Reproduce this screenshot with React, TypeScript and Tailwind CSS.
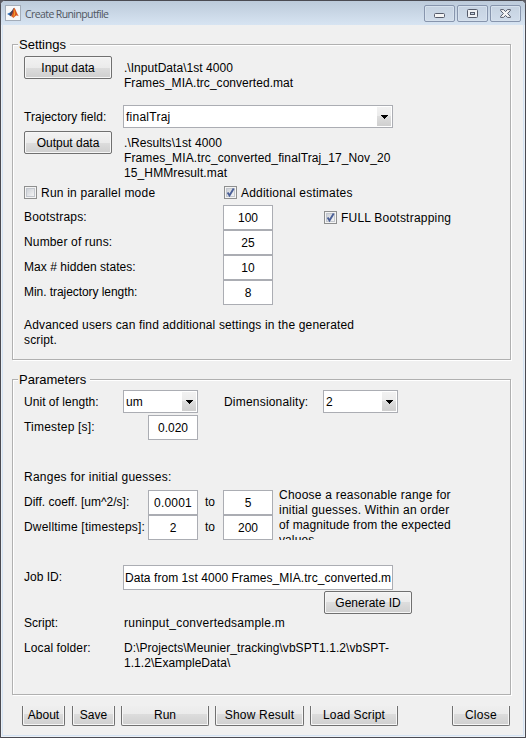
import type { ReactNode } from "react";

function Label({ children, className = "" }: { children: ReactNode; className?: string }) {
  return <div className={`shrink-0 whitespace-pre leading-[15px] ${className}`}>{children}</div>;
}

function PushButton({ children, className = "" }: { children: ReactNode; className?: string }) {
  return (
    <button
      className={`flex h-[23px] w-[88px] shrink-0 justify-center whitespace-pre rounded-[2px] border border-[#707070] bg-[linear-gradient(#f2f2f2_0%,#ebebeb_50%,#dddddd_50%,#cfcfcf_100%)] pt-1 leading-[15px] shadow-[inset_0_0_0_1px_#f6f6f6] ${className}`}
    >
      {children}
    </button>
  );
}

function FooterButton({ children, className }: { children: ReactNode; className: string }) {
  return (
    <button
      className={`flex h-5 shrink-0 justify-center whitespace-pre rounded-b-[2px] border border-t-0 border-[#707070] bg-[linear-gradient(#efefef_0%,#ebebeb_40%,#dddddd_40%,#cfcfcf_100%)] pt-[2px] leading-[15px] shadow-[inset_1px_-1px_0_#f6f6f6,inset_-1px_0_0_#f6f6f6] ${className}`}
    >
      {children}
    </button>
  );
}

function Field({ children, className = "w-[50px] text-center" }: { children: ReactNode; className?: string }) {
  return (
    <div className={`h-[25px] shrink-0 overflow-hidden whitespace-pre border border-[#abadb3] bg-white pt-[5px] leading-[15px] ${className}`}>
      {children}
    </div>
  );
}

function Combo({ children, className }: { children: ReactNode; className: string }) {
  return (
    <div className={`flex h-[23px] shrink-0 justify-between border border-[#abadb3] bg-white pl-[2px] ${className}`}>
      <span className="pt-1 leading-[15px]">{children}</span>
      <span className="my-px mr-px flex h-[19px] w-[14px] items-center justify-center bg-[linear-gradient(#f2f2f2_0%,#ebebeb_50%,#dddddd_50%,#cfcfcf_100%)]">
        <svg width="7" height="4" viewBox="0 0 7 4" shapeRendering="crispEdges">
          <path d="M0 0h7v1h-1v1h-1v1h-1v1h-1v-1h-1v-1h-1v-1h-1z" fill="#000" />
        </svg>
      </span>
    </div>
  );
}

function Check({ checked = false, className = "" }: { checked?: boolean; className?: string }) {
  return (
    <svg className={`shrink-0 ${className}`} width="13" height="13" viewBox="0 0 13 13">
      <defs>
        <linearGradient id="well" x1="0" y1="0" x2="1" y2="1">
          <stop offset="0" stopColor="#cbcfd5" />
          <stop offset="1" stopColor="#f6f6f6" />
        </linearGradient>
      </defs>
      <rect x=".5" y=".5" width="12" height="12" fill="#f4f4f4" stroke="#8e8f8f" />
      <rect x="2.5" y="2.5" width="8" height="8" fill="url(#well)" stroke="#c3c7ce" />
      {checked && <path d="M3.6 6.4 5.5 9.4 9.7 2.6" fill="none" stroke="#4a5f97" strokeWidth="1.9" />}
    </svg>
  );
}

function Group({ title, children, className = "" }: { title: string; children: ReactNode; className?: string }) {
  return (
    <section className={`h-[316px] w-[499px] shrink-0 border border-[#b0b0b0] pl-[11px] shadow-[1px_1px_0_#fff,inset_1px_1px_0_#fff] ${className}`}>
      <h2 className="-ml-[6px] -mt-2 h-[15px] w-fit bg-[#f0f0f0] pl-px pr-1 text-[13px] leading-[15px]">{title}</h2>
      {children}
    </section>
  );
}

function MatlabIcon() {
  return (
    <svg width="16" height="16" viewBox="0 0 16 16">
      <rect x=".5" y=".5" width="15" height="15" fill="#f8f9fa" stroke="#a3acb8" />
      <path d="M2 9 5.5 7.2 7 5.8 8.6 7.4 6 11.2 4.5 10.2z" fill="#2f6fb5" />
      <path d="M5.5 7.2C7.2 6.4 8 3 9.2 2.8L8 8 6 11.2 4.5 10.2z" fill="#4a3d52" />
      <path d="M9.2 2.8C10.6 3.4 11.6 8.6 14 11.3 12.6 10.6 11.6 10.2 10.6 11 9.6 11.8 8.6 12.8 8 13 7.8 12 7 11.3 6 11.2 8 9.6 8.2 4 9.2 2.8z" fill="#d9541e" />
      <path d="M9.2 3.4C9.6 6 9 9.4 8 12 8.8 11.6 9.6 10.8 10 10 10.4 8 10 5 9.2 3.4z" fill="#f3a02f" />
    </svg>
  );
}

function Caption({ children }: { children: ReactNode }) {
  return (
    <span className="flex h-[17px] w-[31px] items-center justify-center rounded-[2px] border border-[#8795ad] bg-[linear-gradient(#c5d2e1,#d0dcea)] shadow-[inset_0_0_0_1px_#d6e1ed]">
      {children}
    </span>
  );
}

const runSettings = [
  { name: "Number of runs:", value: "25", tracking: "tracking-[0.15px]" },
  { name: "Max # hidden states:", value: "10", tracking: "tracking-[0.05px]" },
  { name: "Min. trajectory length:", value: "8", tracking: "tracking-[-0.06px]" },
];

export default function App() {
  return (
    <div className="h-[738px] w-[526px] overflow-hidden bg-[#5b5b63] font-['Liberation_Sans',Arial,sans-serif] text-[12px] text-black">
      <div className="flex h-[738px] w-[526px] flex-col rounded-t-[5px] border border-[#4b4b52] bg-[#f0f0f0] shadow-[inset_0_0_0_1px_#eaf0f6,inset_0_0_0_2px_#d5e3f3]">
        <header className="flex h-6 shrink-0 rounded-t-[4px] bg-[linear-gradient(#bccada,#d7e4f2)] pl-1 pr-1 pt-1">
          <MatlabIcon />
          <h1 className="ml-1 whitespace-pre font-['Open_Sans','Noto_Sans',sans-serif] text-[10.5px] leading-[18px] tracking-[-0.6px] text-[#4f5661]">
            Create Runinputfile
          </h1>
          <div className="ml-auto flex gap-[2px]">
            <Caption>
              <svg width="11" height="5" viewBox="0 0 11 5" className="mt-1">
                <rect x=".5" y=".5" width="10" height="4" rx="1" fill="#f5f5f5" stroke="#555b6a" />
              </svg>
            </Caption>
            <Caption>
              <svg width="11" height="9" viewBox="0 0 11 9">
                <rect x=".5" y=".5" width="10" height="8" rx="1" fill="#eef0f3" stroke="#555b6a" />
                <rect x="3.5" y="3.5" width="4" height="2" fill="#c5d2e1" stroke="#555b6a" />
              </svg>
            </Caption>
            <Caption>
              <svg width="11" height="9" viewBox="0 0 11 9">
                <path d="M.6.6h3l1.9 2 1.9-2h3v1L7.6 4.5l2.8 2.9v1h-3l-1.9-2-1.9 2h-3v-1l2.8-2.9L.6 1.6z" fill="#f5f5f5" stroke="#555b6a" />
              </svg>
            </Caption>
          </div>
        </header>

        <main className="flex flex-col pl-[11px] pt-[19px]">
          <Group title="Settings">
            <div className="mt-1 flex h-[49px]">
              <PushButton>Input data</PushButton>
              <Label className="ml-3 pt-[5px] tracking-[0.04px]">{".\\InputData\\1st 4000\nFrames_MIA.trc_converted.mat"}</Label>
            </div>
            <div className="flex h-[26px]">
              <Label className="w-[99px] pt-[5px] tracking-[0.04px]">Trajectory field:</Label>
              <Combo className="w-[270px] tracking-[0.25px]">finalTraj</Combo>
            </div>
            <div className="flex h-[55px]">
              <PushButton>Output data</PushButton>
              <Label className="ml-3 pt-[5px] tracking-[0.11px]">
                {".\\Results\\1st 4000\nFrames_MIA.trc_converted_finalTraj_17_Nov_20\n15_HMMresult.mat"}
              </Label>
            </div>
            <div className="flex h-[19px] tracking-[0.21px]">
              <div className="flex w-[200px] gap-1">
                <Check />
                <Label>Run in parallel mode</Label>
              </div>
              <Check checked />
              <Label className="ml-1">Additional estimates</Label>
            </div>
            <div className="flex">
              <Label className="w-[199px] pt-[5px] tracking-[0.2px]">Bootstraps:</Label>
              <Field>100</Field>
              <Check checked className="ml-[51px] mt-[6px]" />
              <Label className="ml-1 pt-[6px] tracking-[0.22px]">FULL Bootstrapping</Label>
            </div>
            {runSettings.map(({ name, value, tracking }) => (
              <div key={name} className="flex">
                <Label className={`w-[199px] pt-[5px] ${tracking}`}>{name}</Label>
                <Field>{value}</Field>
              </div>
            ))}
            <Label className="mt-[13px] tracking-[0.155px]">
              {"Advanced users can find additional settings in the generated\nscript."}
            </Label>
          </Group>

          <Group title="Parameters" className="mt-[19px]">
            <div className="mt-[3px] flex h-[25px]">
              <Label className="w-[99px] pt-[5px] tracking-[0.04px]">Unit of length:</Label>
              <Combo className="w-[75px] tracking-[0.2px]">um</Combo>
              <Label className="ml-[26px] w-[99px] pt-[5px] tracking-[0.2px]">Dimensionality:</Label>
              <Combo className="w-[75px]">2</Combo>
            </div>
            <div className="flex">
              <Label className="w-[124px] pt-[5px] tracking-[0.2px]">Timestep [s]:</Label>
              <Field>0.020</Field>
            </div>
            <Label className="mt-[30px] tracking-[0.25px]">Ranges for initial guesses:</Label>
            <div className="mt-[3px] flex h-[52px]">
              <div className="pt-[2px]">
                <div className="flex">
                  <Label className="w-[124px] pt-[5px]">Diff. coeff. [um^2/s]:</Label>
                  <Field className="w-[50px] text-center tracking-[0.2px]">0.0001</Field>
                  <Label className="w-[25px] pl-[7px] pt-[5px]">to</Label>
                  <Field>5</Field>
                </div>
                <div className="flex">
                  <Label className="w-[124px] pt-[5px] tracking-[0.2px]">Dwelltime [timesteps]:</Label>
                  <Field>2</Field>
                  <Label className="w-[25px] pl-[7px] pt-[5px]">to</Label>
                  <Field>200</Field>
                </div>
              </div>
              <div className="ml-[6px] h-[52px] overflow-hidden">
                <Label className="tracking-[0.22px]">{"Choose a reasonable range for\ninitial guesses. Within an order"}</Label>
                <Label className="tracking-[0.1px]">{"of magnitude from the expected\nvalues."}</Label>
              </div>
            </div>
            <div className="mt-[25px] flex h-[26px]">
              <Label className="w-[99px] pt-[5px]">Job ID:</Label>
              <Field className="w-[270px] pl-px tracking-[0.06px]">Data from 1st 4000 Frames_MIA.trc_converted.m</Field>
            </div>
            <PushButton className="ml-[300px]">Generate ID</PushButton>
            <div className="mt-[2px] flex">
              <Label className="w-[100px]">Script:</Label>
              <Label className="tracking-[0.24px]">runinput_convertedsample.m</Label>
            </div>
            <div className="mt-[10px] flex">
              <Label className="w-[100px] tracking-[0.1px]">Local folder:</Label>
              <Label className="tracking-[0.05px]">{"D:\\Projects\\Meunier_tracking\\vbSPT1.1.2\\vbSPT-\n1.1.2\\ExampleData\\"}</Label>
            </div>
          </Group>

          <footer className="mt-[11px] flex pl-[10px]">
            <FooterButton className="w-[43px]">About</FooterButton>
            <FooterButton className="ml-[7px] w-[43px]">Save</FooterButton>
            <FooterButton className="ml-[6px] w-[88px]">Run</FooterButton>
            <FooterButton className="ml-[6px] w-[89px] tracking-[0.2px]">Show Result</FooterButton>
            <FooterButton className="ml-[6px] w-[88px] tracking-[0.1px]">Load Script</FooterButton>
            <FooterButton className="ml-[54px] w-[58px] tracking-[0.3px]">Close</FooterButton>
          </footer>
        </main>
      </div>
    </div>
  );
}
